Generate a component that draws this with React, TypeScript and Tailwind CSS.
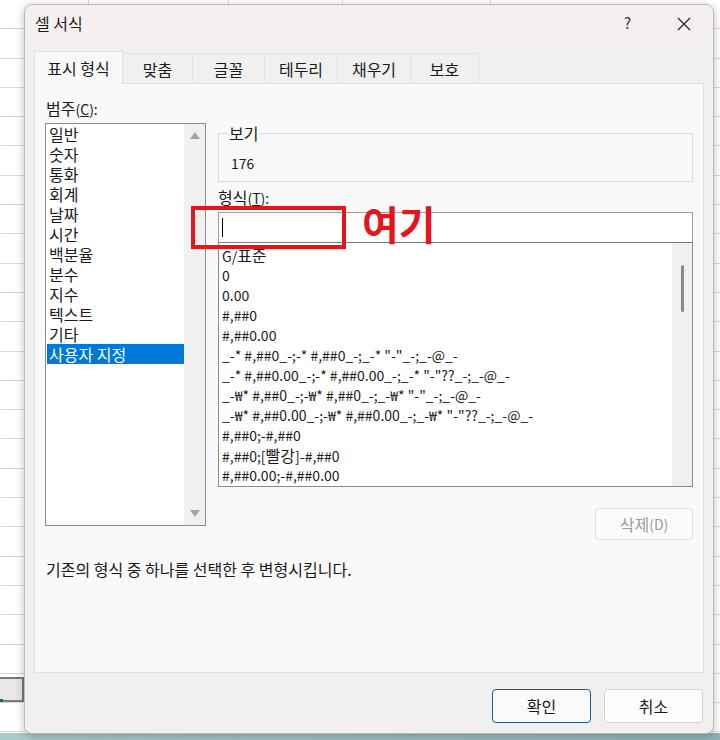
import React from "react";

const font = { fontFamily: '"Noto Sans CJK KR", "Noto Sans", sans-serif' };

// Korean glyphs in the dialog run larger than the Latin ones
const K = ({ children }: { children: React.ReactNode }) => <span className="text-[16px]">{children}</span>;

const categories = ["일반", "숫자", "통화", "회계", "날짜", "시간", "백분율", "분수", "지수", "텍스트", "기타", "사용자 지정"];

const formats: React.ReactNode[] = [
  <>G/<K>표준</K></>,
  "0",
  "0.00",
  "#,##0",
  "#,##0.00",
  '_-* #,##0_-;-* #,##0_-;_-* "-"_-;_-@_-',
  '_-* #,##0.00_-;-* #,##0.00_-;_-* "-"??_-;_-@_-',
  '_-₩* #,##0_-;-₩* #,##0_-;_-₩* "-"_-;_-@_-',
  '_-₩* #,##0.00_-;-₩* #,##0.00_-;_-₩* "-"??_-;_-@_-',
  "#,##0;-#,##0",
  <>#,##0;[<K>빨강</K>]-#,##0</>,
  "#,##0.00;-#,##0.00",
];

const tabs = ["표시 형식", "맞춤", "글꼴", "테두리", "채우기", "보호"];
const tabWidths = ["w-[89px]", "w-[70px]", "w-[72px]", "w-[73px]", "w-[73px]", "w-[68px]"];

export default function App() {
  return (
    <div className="relative w-[720px] h-[740px] overflow-hidden bg-white text-[#1a1a1a]" style={font}>
      {/* spreadsheet behind the dialog */}
      <div className="absolute inset-0 bg-[repeating-linear-gradient(to_bottom,transparent_0px,transparent_28.3px,#d9d9d9_28.3px,#d9d9d9_29.3px)]" />
      <div className="absolute top-0 bottom-0 left-[88px] w-px bg-[#d9d9d9]" />
      <div className="absolute top-0 bottom-0 left-[228px] w-px bg-[#d9d9d9]" />
      <div className="absolute top-0 bottom-0 left-[342px] w-px bg-[#d9d9d9]" />
      <div className="absolute top-0 bottom-0 left-[490px] w-px bg-[#d9d9d9]" />
      <div className="absolute left-0 top-[677px] w-[24px] h-[25px] border-2 border-l-0 border-[#7a7a7a] bg-[#e8e8e8]" />
      <div className="absolute left-0 top-[699px] w-[3px] h-[3px] bg-[#1e6b3a]" />
      <div className="absolute left-0 right-0 bottom-0 h-[7px] bg-[linear-gradient(to_right,#a9cccd,#8eb3b8)]" />

      {/* dialog */}
      <div className="absolute left-[24px] top-[4px] w-[690px] h-[730px] rounded-[8px] border border-[#b9b9b9] bg-[#f0f0f0] shadow-[0_2px_10px_rgba(0,0,0,0.25)] overflow-hidden flex flex-col">
        {/* title bar */}
        <div className="h-[36px] bg-[#f6efef] flex items-center pl-[10px] pr-[22px] shrink-0">
          <span className="text-[16px]">셀 서식</span>
          <span className="ml-auto text-[15px] text-[#333] mr-[46px]">?</span>
          <svg width="14" height="14" viewBox="0 0 14 14" className="mt-[1px]">
            <path d="M1 1 L13 13 M13 1 L1 13" stroke="#222" strokeWidth="1.2" fill="none" />
          </svg>
        </div>

        {/* tabs */}
        <div className="flex items-end pl-[9px] mt-[9px] h-[33px] shrink-0">
          {tabs.map((t, i) =>
            i === 0 ? (
              <div
                key={t}
                className={`${tabWidths[i]} h-[33px] bg-[#f9f9f9] border border-b-0 border-[#e0e0e0] flex items-center justify-center text-[16px] relative z-10 translate-y-[1px]`}
              >
                {t}
              </div>
            ) : (
              <div
                key={t}
                className={`${tabWidths[i]} h-[30px] border border-l-0 border-b-0 border-[#e2e2e2] flex items-center justify-center text-[16px]`}
              >
                {t}
              </div>
            )
          )}
        </div>

        {/* tab panel */}
        <div className="mx-[9px] w-[670px] h-[590px] bg-[#f9f9f9] border border-[#e0e0e0] shrink-0 pl-[10px] pt-[14px] text-[14px]">
          <div className="flex gap-[12px]">
            {/* category */}
            <div className="w-[161px]">
              <div className="h-[20px] leading-[20px] ml-[1px]">
                <K>범주</K>(<span className="underline">C</span>):
              </div>
              <div className="mt-[5px] h-[403px] border border-[#8c8c8c] bg-white flex">
                <div className="flex-1 pl-[1px]">
                  {categories.map((c, i) => (
                    <div
                      key={c}
                      className={`h-[20px] leading-[20px] pl-[2px] text-[16px] ${i === categories.length - 1 ? "bg-[#0078d7] text-white" : ""}`}
                    >
                      {c}
                    </div>
                  ))}
                </div>
                <div className="w-[21px] bg-[#f0f0f0] flex flex-col items-center justify-between py-[8px]">
                  <svg width="10" height="7" viewBox="0 0 10 7">
                    <path d="M5 0 L10 7 L0 7 Z" fill="#a3a3a3" />
                  </svg>
                  <svg width="10" height="7" viewBox="0 0 10 7">
                    <path d="M0 0 L10 0 L5 7 Z" fill="#a3a3a3" />
                  </svg>
                </div>
              </div>
            </div>

            {/* right column */}
            <div className="w-[475px] pt-[35px]">
              <fieldset className="border border-[#dcdcdc] h-[57px] px-[9px] -mt-[8px]">
                <legend className="px-[1px] leading-[16px] text-[16px]">보기</legend>
                <div className="pl-[3px] mt-[12px] leading-[20px]">176</div>
              </fieldset>
              <div className="mt-[5px] h-[20px] leading-[20px]">
                <K>형식</K>(<span className="underline">T</span>):
              </div>
              <div className="mt-[5px] h-[31px] border border-[#a0a0a0] border-b-[#7a7a7a] bg-white flex items-center pl-[3px]">
                <div className="w-px h-[19px] bg-black" />
              </div>
              <div className="h-[244px] border border-t-0 border-[#8c8c8c] bg-white flex">
                <div className="flex-1 pt-[2px] pl-[3px] overflow-hidden whitespace-nowrap">
                  {formats.map((f, i) => (
                    <div key={i} className="h-[20px] leading-[20px]">
                      {f}
                    </div>
                  ))}
                </div>
                <div className="w-[20px] bg-[#f0f0f0] flex justify-center pt-[22px]">
                  <div className="w-[3px] h-[47px] rounded-full bg-[#8a8a8a]" />
                </div>
              </div>
              <div className="flex justify-end mt-[21px]">
                <div className="w-[98px] h-[32px] border border-[#dedede] rounded-[4px] bg-[#fbfbfb] flex items-center justify-center text-[#9b9b9b]">
                  <K>삭제</K>(D)
                </div>
              </div>
            </div>
          </div>
          <div className="mt-[19px] ml-[1px] leading-[20px] text-[16px]">기존의 형식 중 하나를 선택한 후 변형시킵니다.</div>
        </div>

        {/* buttons */}
        <div className="flex justify-end gap-[13px] pr-[10px] mt-[16px] text-[16px]">
          <div className="w-[99px] h-[34px] border border-[#1d5a96] rounded-[4px] bg-[#fbfbfb] flex items-center justify-center">확인</div>
          <div className="w-[99px] h-[34px] border border-[#d3d3d3] rounded-[4px] bg-[#fdfdfd] flex items-center justify-center">취소</div>
        </div>
      </div>

      {/* annotation */}
      <div className="absolute left-[191px] top-[206px] w-[155px] h-[43px] border-4 border-[#e3161e]" />
      <div className="absolute left-[362px] top-[195px] text-[40px] font-bold text-[#e3161e] leading-[56px]">여기</div>
    </div>
  );
}
